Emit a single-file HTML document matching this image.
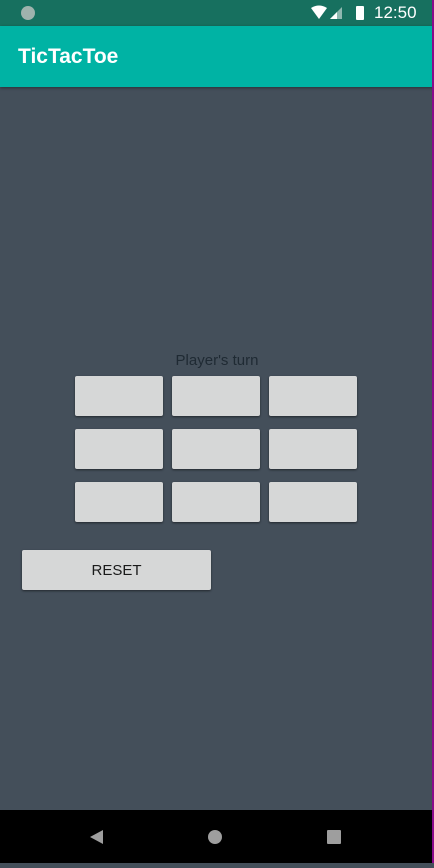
<!DOCTYPE html>
<html><head><style>
body{margin:0;width:434px;height:863px;position:relative;overflow:hidden;background:#444f5a;font-family:"Liberation Sans",sans-serif}
.sb{position:absolute;left:0;top:0;width:434px;height:26px;background:#17705f}
.ab{position:absolute;left:0;top:26px;width:434px;height:61px;background:#00b3a4;box-shadow:0 1px 3px rgba(0,0,0,.4)}
.ab span{position:absolute;left:18px;top:19px;color:#fff;font-size:21px;font-weight:bold}
.b{position:absolute;width:88px;height:40px;background:#d6d7d7;border-radius:2px;box-shadow:0 1px 2px rgba(0,0,0,.5)}
.nav{position:absolute;left:0;top:810px;width:434px;height:53px;background:#000}
.edge{position:absolute;right:0;top:0;width:2px;height:863px;background:#8a0a8a}
</style></head><body>
<div class="sb">
<div style="position:absolute;left:21px;top:6px;width:14px;height:14px;border-radius:50%;background:#9fb3ad"></div>
<svg style="position:absolute;left:309px;top:5px" width="60" height="16"><path d="M2 3 Q10 -2 18 3 L10 14Z" fill="#fff"/><path d="M21 14 L33 2 L33 14Z" fill="#8fb8b0"/><path d="M21 14 L28 7 L28 14Z" fill="#fff"/><rect x="47" y="1" width="8" height="14" rx="1" fill="#fff"/></svg>
<span style="position:absolute;left:374px;top:3px;color:#fff;font-size:17px">12:50</span>
</div>
<div class="ab"><span>TicTacToe</span></div>
<div style="position:absolute;left:0;width:434px;top:352px;text-align:center;color:#1f2a33;font-size:15px">Player's turn</div>
<div class="b" style="left:75px;top:376px"></div><div class="b" style="left:172px;top:376px"></div><div class="b" style="left:269px;top:376px"></div>
<div class="b" style="left:75px;top:429px"></div><div class="b" style="left:172px;top:429px"></div><div class="b" style="left:269px;top:429px"></div>
<div class="b" style="left:75px;top:482px"></div><div class="b" style="left:172px;top:482px"></div><div class="b" style="left:269px;top:482px"></div>
<div class="b" style="left:22px;top:550px;width:189px;line-height:42px;text-align:center;font-size:15px;color:#1a1a1a">RESET</div>
<div class="nav"><svg width="434" height="53"><path d="M90 27 L103 20 L103 34Z" fill="#9e9e9e"/><circle cx="215" cy="27" r="7" fill="#9e9e9e"/><rect x="327" y="20" width="14" height="14" rx="1" fill="#9e9e9e"/></svg></div>
<div class="edge"></div>
</body></html>
